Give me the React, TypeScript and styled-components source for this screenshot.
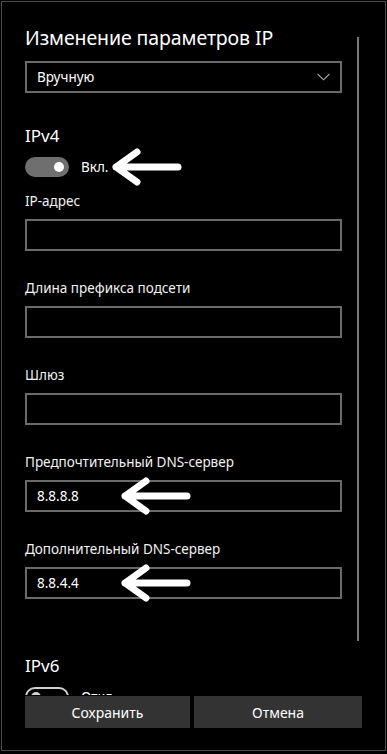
import React from "react";
import styled, { createGlobalStyle } from "styled-components";

const GlobalStyle = createGlobalStyle`
  html, body {
    margin: 0;
    padding: 0;
    background: #000;
  }
  * {
    box-sizing: border-box;
  }
`;

const Window = styled.div`
  margin: 1px;
  width: 385px;
  height: 750px;
  border: 1px solid #4b4b4b;
  background: #000;
  color: #fff;
  font-family: "Noto Sans", "Open Sans", sans-serif;
  display: flex;
  flex-direction: column;
  position: relative;
`;

const ScrollArea = styled.div`
  height: 693px;
  overflow: hidden;
  padding: 22px 0 0 23px;
  position: relative;
  flex-shrink: 0;
`;

const ScrollThumb = styled.div`
  position: absolute;
  top: 35px;
  right: 26px;
  width: 2px;
  height: 604px;
  background: #7a7a7a;
`;

const Title = styled.h1`
  margin: 0;
  font-size: 19.5px;
  line-height: 28px;
  font-weight: 400;
  letter-spacing: -0.1px;
`;

const Select = styled.div`
  margin-top: 9px;
  width: 317px;
  height: 32px;
  border: 2px solid #6a6a6a;
  display: flex;
  align-items: center;
  justify-content: space-between;
  padding: 0 10px 0 10px;
  font-size: 13.5px;
`;

const Section = styled.h2<{ $top: number }>`
  margin: ${(p) => p.$top}px 0 0;
  font-size: 17px;
  line-height: 24px;
  font-weight: 400;
`;

const ToggleRow = styled.div`
  margin-top: 9px;
  height: 20px;
  display: flex;
  align-items: center;
  gap: 12px;
  position: relative;
  font-size: 13.5px;
`;

const Track = styled.div<{ $on: boolean }>`
  width: 44px;
  height: 20px;
  border-radius: 10px;
  display: flex;
  align-items: center;
  justify-content: ${(p) => (p.$on ? "flex-end" : "flex-start")};
  padding: 0 5px;
  background: ${(p) => (p.$on ? "#6f6f6f" : "transparent")};
  border: ${(p) => (p.$on ? "none" : "2px solid #d0d0d0")};
`;

const Knob = styled.div<{ $on: boolean }>`
  width: 10px;
  height: 10px;
  border-radius: 50%;
  background: ${(p) => (p.$on ? "#fff" : "#d0d0d0")};
  margin-left: ${(p) => (p.$on ? "0" : "-1px")};
`;

const Fields = styled.div`
  margin-top: 14px;
  display: flex;
  flex-direction: column;
  gap: 27px;
`;

const Field = styled.div`
  display: flex;
  flex-direction: column;
  gap: 8px;
`;

const Label = styled.label`
  font-size: 13.5px;
  line-height: 20px;
  color: #f2f2f2;
`;

const Input = styled.div`
  position: relative;
  width: 317px;
  height: 32px;
  border: 2px solid #6a6a6a;
  display: flex;
  align-items: center;
  padding-left: 10px;
  font-size: 13.5px;
`;

const Pointer = styled.svg<{ $left: number }>`
  position: absolute;
  left: ${(p) => p.$left}px;
  top: 50%;
  margin-top: -20px;
  overflow: visible;
`;

const Footer = styled.div`
  padding: 1px 23px 0 23px;
  display: grid;
  grid-template-columns: 165px 168px;
  gap: 4px;
`;

const Button = styled.button`
  height: 32px;
  border: none;
  background: #333;
  color: #fff;
  font-family: "Noto Sans", "Open Sans", sans-serif;
  font-size: 14px;
  padding: 0;
`;

function Arrow({ left }: { left: number }) {
  return (
    <Pointer $left={left} width="70" height="40" viewBox="0 0 70 40">
      <path
        d="M66 20 H4 M25 5 L4 20 L25 35"
        fill="none"
        stroke="#fff"
        strokeWidth="7"
        strokeLinecap="round"
        strokeLinejoin="round"
      />
    </Pointer>
  );
}

function Chevron() {
  return (
    <svg width="13" height="8" viewBox="0 0 13 8">
      <path d="M0.5 0.8 L6.5 6.8 L12.5 0.8" fill="none" stroke="#b0b0b0" strokeWidth="1.1" />
    </svg>
  );
}

const fields = [
  { label: "IP-адрес", value: "" },
  { label: "Длина префикса подсети", value: "" },
  { label: "Шлюз", value: "" },
  { label: "Предпочтительный DNS-сервер", value: "8.8.8.8", arrow: true },
  { label: "Дополнительный DNS-сервер", value: "8.8.4.4", arrow: true },
];

export default function App() {
  return (
    <>
      <GlobalStyle />
      <Window>
        <ScrollArea>
          <ScrollThumb />
          <Title>Изменение параметров IP</Title>
          <Select>
            <span>Вручную</span>
            <Chevron />
          </Select>

          <Section $top={31}>IPv4</Section>
          <ToggleRow>
            <Track $on>
              <Knob $on />
            </Track>
            <span>Вкл.</span>
            <Arrow left={87} />
          </ToggleRow>

          <Fields>
            {fields.map((f) => (
              <Field key={f.label}>
                <Label>{f.label}</Label>
                <Input>
                  {f.value}
                  {f.arrow && <Arrow left={94} />}
                </Input>
              </Field>
            ))}
          </Fields>

          <Section $top={55}>IPv6</Section>
          <ToggleRow>
            <Track $on={false}>
              <Knob $on={false} />
            </Track>
            <span>Откл.</span>
          </ToggleRow>
        </ScrollArea>
        <Footer>
          <Button>Сохранить</Button>
          <Button>Отмена</Button>
        </Footer>
      </Window>
    </>
  );
}
